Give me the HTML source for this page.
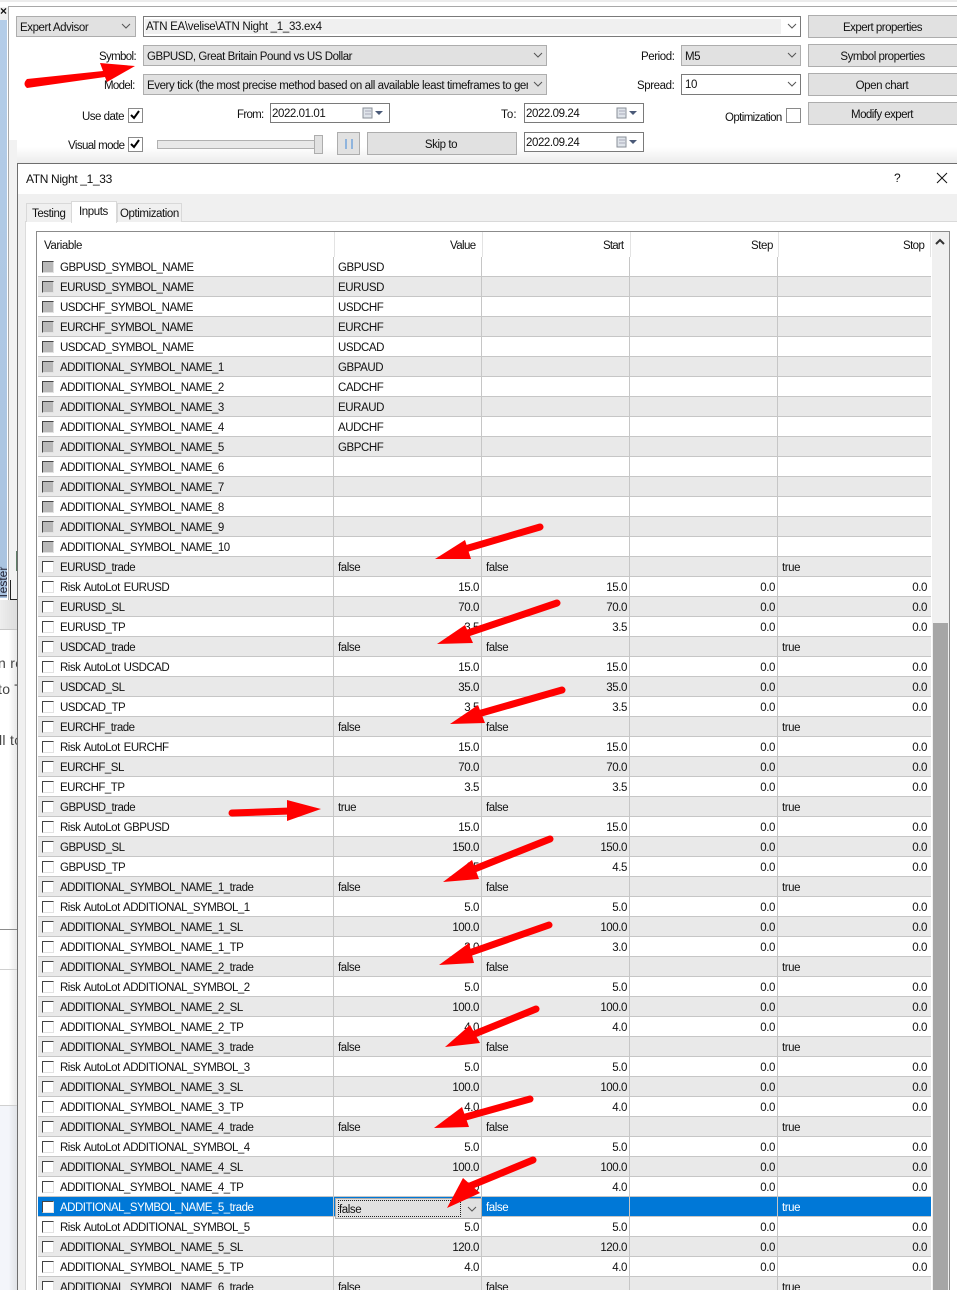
<!DOCTYPE html>
<html style="height:1290px;overflow:hidden"><head><meta charset="utf-8"><style>
html,body{margin:0;padding:0}
body{width:957px;height:1290px;position:relative;overflow:hidden;background:#fff;font:11.5px/14px "Liberation Sans",sans-serif;letter-spacing:-.42px;color:#111}
.a{position:absolute;box-sizing:border-box;white-space:nowrap}
.cb{background:#e1e1e1;border:1px solid #adadad}
.cw{background:#fff;border:1px solid #7a7a7a}
.btn{background:#e1e1e1;border:1px solid #adadad;text-align:center}
.chk{background:#fff;border:1px solid #8a8a8a;width:15px;height:15px}
.ch{position:absolute;width:12px;height:8px}
#clip{position:absolute;left:38px;top:257px;width:893px;height:1033px;overflow:hidden}
.r{position:relative;height:20px;box-sizing:border-box;border-bottom:1px solid #c6c6c6;background:#fff;letter-spacing:-.5px;word-spacing:1.2px}
.r:nth-child(even){background:#e9e9e9}
.r i{position:absolute;left:4px;top:4px;width:12px;height:12px;box-sizing:border-box;background:#fff;border:1px solid #e2e2e2;border-top-color:#444;border-left-color:#444}
.r.g i{background:#b9b9b9}
.r b{font-weight:normal;position:absolute;left:22px;top:4px}
.r u{text-decoration:none;position:absolute;top:4px;letter-spacing:-.42px}
.r u:nth-of-type(1){right:452px}
.r u:nth-of-type(2){right:304px}
.r u:nth-of-type(3){right:156px}
.r u:nth-of-type(4){right:4px}
.r.s u:nth-of-type(1){left:300px;right:auto}
.r.f u:nth-of-type(1){left:300px;right:auto}
.r.f u:nth-of-type(2){left:448px;right:auto}
.r.f u:nth-of-type(3){left:744px;right:auto}
.r.sel{background:#0078d7!important;color:#fff}
.vl{position:absolute;top:257px;width:1px;height:1033px;background:#c6c6c6}
.hs{position:absolute;top:232px;width:1px;height:25px;background:#e3e3e3}
</style></head><body>
<div class="a" style="left:0;top:0;width:957px;height:2px;background:#ececec"></div>
<div class="a" style="left:8px;top:6px;width:949px;height:1px;background:#a8a8a8"></div>
<div class="a" style="left:8px;top:6px;width:1px;height:594px;background:#a8a8a8"></div>
<div class="a" style="left:0;top:7px;width:8px;height:13px;background:#f0f0f0"></div>
<div class="a" style="left:0;top:4px;font-size:12px;font-weight:bold">×</div>
<div class="a" style="left:0;top:20px;width:7px;height:578px;background:linear-gradient(#b4cde8,#a9c3e0)"></div>
<div class="a" style="left:7px;top:20px;width:1px;height:580px;background:#fff"></div>
<div class="a" style="left:9px;top:7px;width:948px;height:156px;background:linear-gradient(#fff 0,#fff 140px,#ececec 156px)"></div>
<div class="a" style="left:9px;top:140px;width:8px;height:460px;background:#f2f2f2"></div>
<div class="a" style="left:0;top:566px;width:7px;height:32px;overflow:hidden"><div class="a" style="left:-15px;top:10px;width:36px;height:14px;transform:rotate(-90deg);font-size:12px;color:#223;letter-spacing:0;text-align:center">Tester</div></div>
<div class="a" style="left:16px;top:551px;width:1px;height:20px;background:#5f7f68"></div>
<div class="a" style="left:10px;top:580px;width:7px;height:20px;border-left:1px solid #222;border-bottom:1px solid #222"></div>
<div class="a" style="left:0;top:600px;width:17px;height:30px;background:linear-gradient(90deg,#eee,#ddd)"></div>
<div class="a" style="left:0;top:629px;width:17px;height:1px;background:#c8c8c8"></div>
<div class="a" style="left:0;top:630px;width:17px;height:660px;background:linear-gradient(90deg,#fff 50%,#e8e8e8)"></div>
<div class="a" style="left:0;top:1105px;width:17px;height:185px;background:linear-gradient(90deg,#f3f5fa 50%,#e0e2e6)"></div>
<div class="a" style="left:0;top:929px;width:17px;height:1px;background:#8c8c8c"></div>
<div class="a" style="left:0;top:969px;width:17px;height:1px;background:#d0d0d0"></div>
<div class="a" style="left:0;top:1105px;width:17px;height:1px;background:#d0d0d0"></div>
<div class="a" style="left:-2px;top:656px;font-size:14px;letter-spacing:.3px;color:#444;width:19px;overflow:hidden">n re</div>
<div class="a" style="left:-2px;top:682px;font-size:14px;letter-spacing:.3px;color:#444;width:19px;overflow:hidden">to T</div>
<div class="a" style="left:-1px;top:733px;font-size:14px;letter-spacing:.3px;color:#444;width:18px;overflow:hidden">ll to</div>

<!-- top controls -->
<div class="a cb" style="left:16px;top:16px;width:120px;height:21px;padding:4px 3px">Expert Advisor</div>
<svg class="ch" style="left:121px;top:23px"><path d="M1 1L5 5L9 1" fill="none" stroke="#555"/></svg>
<div class="a cw" style="left:143px;top:16px;width:658px;height:21px;padding:3px 2px"><div class="a" style="left:1px;top:2px;width:636px;height:15px;background:#f0f0f0"></div><span style="position:relative;letter-spacing:-.3px">ATN EA\velise\ATN Night _1_33.ex4</span></div>
<svg class="ch" style="left:787px;top:23px"><path d="M1 1L5 5L9 1" fill="none" stroke="#555"/></svg>
<div class="a" style="left:99px;top:50px;letter-spacing:-.65px">Symbol:</div>
<div class="a" style="left:104px;top:79px;letter-spacing:-.65px">Model:</div>
<div class="a cb" style="left:143px;top:45px;width:404px;height:21px;padding:4px 3px;letter-spacing:-.45px">GBPUSD, Great Britain Pound vs US Dollar</div>
<svg class="ch" style="left:533px;top:52px"><path d="M1 1L5 5L9 1" fill="none" stroke="#555"/></svg>
<div class="a cb" style="left:143px;top:74px;width:404px;height:21px;padding:4px 3px"><span style="display:block;width:381px;overflow:hidden">Every tick (the most precise method based on all available least timeframes to generate each tick)</span></div>
<svg class="ch" style="left:533px;top:81px"><path d="M1 1L5 5L9 1" fill="none" stroke="#555"/></svg>
<div class="a" style="left:641px;top:50px">Period:</div>
<div class="a" style="left:637px;top:79px">Spread:</div>
<div class="a cb" style="left:681px;top:45px;width:120px;height:21px;padding:4px 3px">M5</div>
<svg class="ch" style="left:787px;top:52px"><path d="M1 1L5 5L9 1" fill="none" stroke="#555"/></svg>
<div class="a cw" style="left:681px;top:74px;width:120px;height:21px;padding:3px 3px">10</div>
<svg class="ch" style="left:787px;top:81px"><path d="M1 1L5 5L9 1" fill="none" stroke="#555"/></svg>
<div class="a btn" style="left:808px;top:15px;width:155px;height:23px;padding:5px 0 0 0;text-indent:-6px;letter-spacing:-.5px">Expert properties</div>
<div class="a btn" style="left:808px;top:44px;width:155px;height:23px;padding:5px 0 0 0;text-indent:-6px;letter-spacing:-.5px">Symbol properties</div>
<div class="a btn" style="left:808px;top:73px;width:155px;height:23px;padding:5px 0 0 0;text-indent:-7px">Open chart</div>
<div class="a btn" style="left:808px;top:102px;width:155px;height:23px;padding:5px 0 0 0;text-indent:-7px;letter-spacing:-.55px">Modify expert</div>

<div class="a" style="left:82px;top:110px;letter-spacing:-.5px">Use date</div>
<div class="a chk" style="left:128px;top:108px"></div>
<svg class="a" style="left:130px;top:110px" width="11" height="10"><path d="M1 5L4 8L9 1" fill="none" stroke="#000" stroke-width="2"/></svg>
<div class="a" style="left:68px;top:139px;letter-spacing:-.6px">Visual mode</div>
<div class="a chk" style="left:128px;top:137px"></div>
<svg class="a" style="left:130px;top:139px" width="11" height="10"><path d="M1 5L4 8L9 1" fill="none" stroke="#000" stroke-width="2"/></svg>
<div class="a" style="left:237px;top:108px;letter-spacing:-.7px">From:</div>
<div class="a" style="left:501px;top:108px;letter-spacing:.1px">To:</div>
<div class="a" style="left:725px;top:111px;letter-spacing:-.6px">Optimization</div>
<div class="a chk" style="left:786px;top:108px"></div>

<div class="a cw" style="left:270px;top:103px;width:120px;height:20px;padding:3px 1px">2022.01.01</div>
<div class="a cw" style="left:524px;top:103px;width:120px;height:20px;padding:3px 1px">2022.09.24</div>
<div class="a cw" style="left:524px;top:132px;width:120px;height:20px;padding:3px 1px">2022.09.24</div>
<svg class="a" style="left:362px;top:106px" width="24" height="14"><rect x="1" y="2" width="9" height="10" fill="#dfe4ea" stroke="#8a8f98"/><path d="M3 5H9M3 8H9" stroke="#aab"/><path d="M13 5H21L17 9Z" fill="#4a5a78"/></svg>
<svg class="a" style="left:616px;top:106px" width="24" height="14"><rect x="1" y="2" width="9" height="10" fill="#dfe4ea" stroke="#8a8f98"/><path d="M3 5H9M3 8H9" stroke="#aab"/><path d="M13 5H21L17 9Z" fill="#4a5a78"/></svg>
<svg class="a" style="left:616px;top:135px" width="24" height="14"><rect x="1" y="2" width="9" height="10" fill="#dfe4ea" stroke="#8a8f98"/><path d="M3 5H9M3 8H9" stroke="#aab"/><path d="M13 5H21L17 9Z" fill="#4a5a78"/></svg>

<div class="a" style="left:157px;top:140px;width:160px;height:9px;background:#e8e8e8;border:1px solid #b0b0b0"></div>
<div class="a" style="left:314px;top:135px;width:9px;height:19px;background:#e1e1e1;border:1px solid #adadad"></div>
<div class="a btn" style="left:337px;top:132px;width:23px;height:23px"></div>
<div class="a" style="left:345px;top:139px;width:2px;height:10px;background:#8fb4dd"></div>
<div class="a" style="left:351px;top:139px;width:2px;height:10px;background:#8fb4dd"></div>
<div class="a btn" style="left:367px;top:132px;width:150px;height:23px;padding-top:5px;text-indent:-2px">Skip to</div>

<!-- dialog -->
<div class="a" style="left:17px;top:163px;width:940px;height:1127px;background:#f0f0f0;border-left:1px solid #6e6e6e;border-top:1px solid #6e6e6e"></div>
<div class="a" style="left:18px;top:164px;width:939px;height:30px;background:#fff"></div>
<div class="a" style="left:26px;top:172px;font-size:12px;letter-spacing:-.35px">ATN Night _1_33</div>
<div class="a" style="left:894px;top:171px;font-size:12px">?</div>
<svg class="a" style="left:936px;top:172px" width="12" height="12"><path d="M1 1L11 11M11 1L1 11" stroke="#111"/></svg>
<div class="a" style="left:25px;top:221px;width:932px;height:1069px;background:#fff;border-left:1px solid #dcdcdc;border-top:1px solid #d9d9d9"></div>
<div class="a" style="left:26px;top:203px;width:46px;height:19px;background:#f0f0f0;border:1px solid #d9d9d9;border-bottom:0;padding:3px 0 0 5px">Testing</div>
<div class="a" style="left:117px;top:203px;width:65px;height:19px;background:#f0f0f0;border:1px solid #d9d9d9;border-bottom:0;padding:3px 0 0 2px">Optimization</div>
<div class="a" style="left:71px;top:201px;width:46px;height:22px;background:#fff;border:1px solid #d9d9d9;border-bottom:0;padding:3px 0 0 7px">Inputs</div>

<!-- table -->
<div class="a" style="left:36px;top:231px;width:914px;height:1059px;background:#fff;border:1px solid #8b8b8b;border-bottom:0"></div>
<div class="a" style="left:44px;top:239px">Variable</div>
<div class="a" style="left:450px;top:239px;letter-spacing:-.6px">Value</div>
<div class="a" style="left:603px;top:239px;letter-spacing:-.8px">Start</div>
<div class="a" style="left:751px;top:239px">Step</div>
<div class="a" style="left:903px;top:239px;letter-spacing:-.6px">Stop</div>
<div class="hs" style="left:334px"></div><div class="hs" style="left:482px"></div><div class="hs" style="left:630px"></div><div class="hs" style="left:778px"></div><div class="hs" style="left:930px"></div>
<div class="a" style="left:932px;top:232px;width:17px;height:1058px;background:#f0f0f0"></div>
<div class="a" style="left:933px;top:623px;width:15px;height:667px;background:#a6a6a6"></div>
<svg class="a" style="left:935px;top:238px" width="10" height="8"><path d="M1 6L5 2L9 6" fill="none" stroke="#333" stroke-width="2"/></svg>

<div id="clip">
<div class="r g s"><i></i><b>GBPUSD_SYMBOL_NAME</b><u>GBPUSD</u></div>
<div class="r g s"><i></i><b>EURUSD_SYMBOL_NAME</b><u>EURUSD</u></div>
<div class="r g s"><i></i><b>USDCHF_SYMBOL_NAME</b><u>USDCHF</u></div>
<div class="r g s"><i></i><b>EURCHF_SYMBOL_NAME</b><u>EURCHF</u></div>
<div class="r g s"><i></i><b>USDCAD_SYMBOL_NAME</b><u>USDCAD</u></div>
<div class="r g s"><i></i><b>ADDITIONAL_SYMBOL_NAME_1</b><u>GBPAUD</u></div>
<div class="r g s"><i></i><b>ADDITIONAL_SYMBOL_NAME_2</b><u>CADCHF</u></div>
<div class="r g s"><i></i><b>ADDITIONAL_SYMBOL_NAME_3</b><u>EURAUD</u></div>
<div class="r g s"><i></i><b>ADDITIONAL_SYMBOL_NAME_4</b><u>AUDCHF</u></div>
<div class="r g s"><i></i><b>ADDITIONAL_SYMBOL_NAME_5</b><u>GBPCHF</u></div>
<div class="r g s"><i></i><b>ADDITIONAL_SYMBOL_NAME_6</b></div>
<div class="r g s"><i></i><b>ADDITIONAL_SYMBOL_NAME_7</b></div>
<div class="r g s"><i></i><b>ADDITIONAL_SYMBOL_NAME_8</b></div>
<div class="r g s"><i></i><b>ADDITIONAL_SYMBOL_NAME_9</b></div>
<div class="r g s"><i></i><b>ADDITIONAL_SYMBOL_NAME_10</b></div>
<div class="r f"><i></i><b>EURUSD_trade</b><u>false</u><u>false</u><u>true</u></div>
<div class="r"><i></i><b>Risk AutoLot EURUSD</b><u>15.0</u><u>15.0</u><u>0.0</u><u>0.0</u></div>
<div class="r"><i></i><b>EURUSD_SL</b><u>70.0</u><u>70.0</u><u>0.0</u><u>0.0</u></div>
<div class="r"><i></i><b>EURUSD_TP</b><u>3.5</u><u>3.5</u><u>0.0</u><u>0.0</u></div>
<div class="r f"><i></i><b>USDCAD_trade</b><u>false</u><u>false</u><u>true</u></div>
<div class="r"><i></i><b>Risk AutoLot USDCAD</b><u>15.0</u><u>15.0</u><u>0.0</u><u>0.0</u></div>
<div class="r"><i></i><b>USDCAD_SL</b><u>35.0</u><u>35.0</u><u>0.0</u><u>0.0</u></div>
<div class="r"><i></i><b>USDCAD_TP</b><u>3.5</u><u>3.5</u><u>0.0</u><u>0.0</u></div>
<div class="r f"><i></i><b>EURCHF_trade</b><u>false</u><u>false</u><u>true</u></div>
<div class="r"><i></i><b>Risk AutoLot EURCHF</b><u>15.0</u><u>15.0</u><u>0.0</u><u>0.0</u></div>
<div class="r"><i></i><b>EURCHF_SL</b><u>70.0</u><u>70.0</u><u>0.0</u><u>0.0</u></div>
<div class="r"><i></i><b>EURCHF_TP</b><u>3.5</u><u>3.5</u><u>0.0</u><u>0.0</u></div>
<div class="r f"><i></i><b>GBPUSD_trade</b><u>true</u><u>false</u><u>true</u></div>
<div class="r"><i></i><b>Risk AutoLot GBPUSD</b><u>15.0</u><u>15.0</u><u>0.0</u><u>0.0</u></div>
<div class="r"><i></i><b>GBPUSD_SL</b><u>150.0</u><u>150.0</u><u>0.0</u><u>0.0</u></div>
<div class="r"><i></i><b>GBPUSD_TP</b><u>4.5</u><u>4.5</u><u>0.0</u><u>0.0</u></div>
<div class="r f"><i></i><b>ADDITIONAL_SYMBOL_NAME_1_trade</b><u>false</u><u>false</u><u>true</u></div>
<div class="r"><i></i><b>Risk AutoLot ADDITIONAL_SYMBOL_1</b><u>5.0</u><u>5.0</u><u>0.0</u><u>0.0</u></div>
<div class="r"><i></i><b>ADDITIONAL_SYMBOL_NAME_1_SL</b><u>100.0</u><u>100.0</u><u>0.0</u><u>0.0</u></div>
<div class="r"><i></i><b>ADDITIONAL_SYMBOL_NAME_1_TP</b><u>3.0</u><u>3.0</u><u>0.0</u><u>0.0</u></div>
<div class="r f"><i></i><b>ADDITIONAL_SYMBOL_NAME_2_trade</b><u>false</u><u>false</u><u>true</u></div>
<div class="r"><i></i><b>Risk AutoLot ADDITIONAL_SYMBOL_2</b><u>5.0</u><u>5.0</u><u>0.0</u><u>0.0</u></div>
<div class="r"><i></i><b>ADDITIONAL_SYMBOL_NAME_2_SL</b><u>100.0</u><u>100.0</u><u>0.0</u><u>0.0</u></div>
<div class="r"><i></i><b>ADDITIONAL_SYMBOL_NAME_2_TP</b><u>4.0</u><u>4.0</u><u>0.0</u><u>0.0</u></div>
<div class="r f"><i></i><b>ADDITIONAL_SYMBOL_NAME_3_trade</b><u>false</u><u>false</u><u>true</u></div>
<div class="r"><i></i><b>Risk AutoLot ADDITIONAL_SYMBOL_3</b><u>5.0</u><u>5.0</u><u>0.0</u><u>0.0</u></div>
<div class="r"><i></i><b>ADDITIONAL_SYMBOL_NAME_3_SL</b><u>100.0</u><u>100.0</u><u>0.0</u><u>0.0</u></div>
<div class="r"><i></i><b>ADDITIONAL_SYMBOL_NAME_3_TP</b><u>4.0</u><u>4.0</u><u>0.0</u><u>0.0</u></div>
<div class="r f"><i></i><b>ADDITIONAL_SYMBOL_NAME_4_trade</b><u>false</u><u>false</u><u>true</u></div>
<div class="r"><i></i><b>Risk AutoLot ADDITIONAL_SYMBOL_4</b><u>5.0</u><u>5.0</u><u>0.0</u><u>0.0</u></div>
<div class="r"><i></i><b>ADDITIONAL_SYMBOL_NAME_4_SL</b><u>100.0</u><u>100.0</u><u>0.0</u><u>0.0</u></div>
<div class="r"><i></i><b>ADDITIONAL_SYMBOL_NAME_4_TP</b><u>4.0</u><u>4.0</u><u>0.0</u><u>0.0</u></div>
<div class="r f sel"><i></i><b>ADDITIONAL_SYMBOL_NAME_5_trade</b><u>false</u><u>false</u><u>true</u></div>
<div class="r"><i></i><b>Risk AutoLot ADDITIONAL_SYMBOL_5</b><u>5.0</u><u>5.0</u><u>0.0</u><u>0.0</u></div>
<div class="r"><i></i><b>ADDITIONAL_SYMBOL_NAME_5_SL</b><u>120.0</u><u>120.0</u><u>0.0</u><u>0.0</u></div>
<div class="r"><i></i><b>ADDITIONAL_SYMBOL_NAME_5_TP</b><u>4.0</u><u>4.0</u><u>0.0</u><u>0.0</u></div>
<div class="r f"><i></i><b>ADDITIONAL_SYMBOL_NAME_6_trade</b><u>false</u><u>false</u><u>true</u></div>
</div>
<div class="vl" style="left:333px"></div><div class="vl" style="left:481px"></div><div class="vl" style="left:629px"></div><div class="vl" style="left:777px"></div>

<div class="a cb" style="left:335px;top:1198px;width:147px;height:21px"></div>
<div class="a" style="left:338px;top:1200px;width:123px;height:17px;border:1px dotted #222;line-height:16px;padding-top:1px">false</div>
<svg class="ch" style="left:467px;top:1206px"><path d="M1 1L5 5L9 1" fill="none" stroke="#555"/></svg>

<!-- red arrows -->
<svg class="a" style="left:0;top:0" width="957" height="1290" fill="#f00" stroke="#f00" stroke-linecap="round" stroke-width="7">
<path stroke="none" d="M135 66L100 63L103 71L27 79Q22 84 27 88L105 77L107 82Z"/>
<path d="M540 527L465 549"/><path stroke="none" d="M435 559L465 540L471 559Z"/>
<path d="M557 603L465 634"/><path stroke="none" d="M437 644L465 625L473 643Z"/>
<path d="M562 690L478 714"/><path stroke="none" d="M450 724L478 705L485 723Z"/>
<path d="M232 813L290 811"/><path stroke="none" d="M321 809L287 800L287 821Z"/>
<path d="M550 839L472 870"/><path stroke="none" d="M443 882L472 860L479 879Z"/>
<path d="M549 925L469 953"/><path stroke="none" d="M439 965L469 943L474 963Z"/>
<path d="M536 1009L472 1035"/><path stroke="none" d="M445 1047L470 1025L480 1043Z"/>
<path d="M530 1099L462 1118"/><path stroke="none" d="M434 1128L462 1107L469 1127Z"/>
<path d="M533 1160L470 1186"/><path stroke="none" d="M447 1208L463 1178L480 1193Z"/>
</svg>
</body></html>
